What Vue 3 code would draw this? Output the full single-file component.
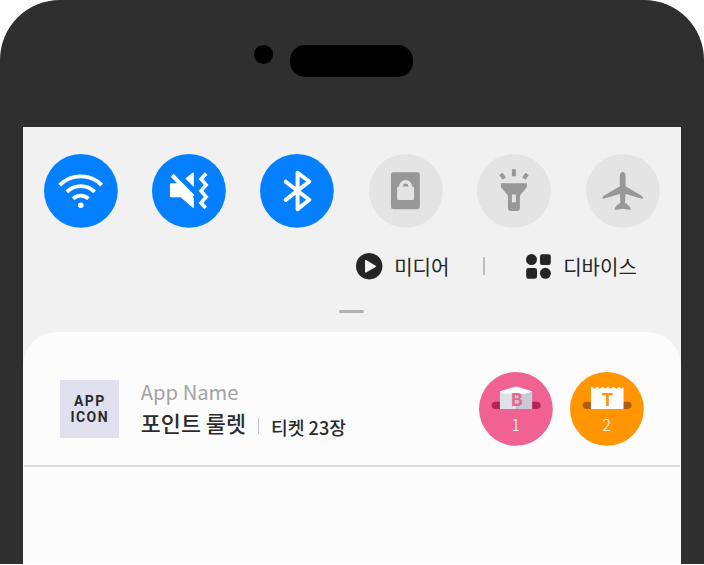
<script setup>
const toggles = [
  { name: 'wifi', on: true },
  { name: 'mute', on: true },
  { name: 'bluetooth', on: true },
  { name: 'lock', on: false },
  { name: 'torch', on: false },
  { name: 'airplane', on: false },
]
</script>

<template>
  <div class="phone">
    <div class="bezel">
      <span class="camera"></span>
      <span class="speaker"></span>
    </div>
    <div class="screen">
      <div class="toggles">
        <svg v-for="t in toggles" :key="t.name" class="toggle" viewBox="0 0 74 74">
          <circle cx="37" cy="37" r="37" :fill="t.on ? '#0480ff' : '#e4e4e4'" />
          <g v-if="t.name === 'wifi'" fill="none" stroke="#fff" stroke-width="3.8">
            <path d="M15.8 31.2A29.6 29.6 0 0 1 57.9 31.2" />
            <path d="M22.9 38A19.8 19.8 0 0 1 50.8 38" />
            <path d="M29.1 44.9A11 11 0 0 1 44.6 44.9" />
            <circle cx="36.9" cy="51.4" r="2.8" fill="#fff" stroke="none" />
          </g>
          <g v-else-if="t.name === 'mute'" fill="#fff">
            <path d="M18.7 29.4H27L42 43.8V53.8H41L28.7 43.4H18.7L18 42.7V30.1Z" />
            <path d="M20.2 21.3L41 42.6" stroke="#fff" stroke-width="4" />
            <path d="M33.5 24.6L40.6 18.7H42V33.2Z" />
            <path d="M54.3 19.5L49.2 25L54.3 31L49.2 37L54.3 43L49.2 49L53.8 54.2" fill="none" stroke="#fff" stroke-width="3.6" />
          </g>
          <path v-else-if="t.name === 'bluetooth'" d="M25.8 27.8L49.4 45.9L37.7 55.4V18.9L49.4 27.6L25.8 46" fill="none" stroke="#fff" stroke-width="4" stroke-linecap="round" stroke-linejoin="round" />
          <g v-else-if="t.name === 'lock'">
            <rect x="22" y="18.4" width="29" height="37" rx="2.4" fill="#989898" />
            <rect x="28.2" y="32.6" width="17" height="13.6" rx="1.6" fill="#e4e4e4" />
            <path d="M32.2 33.5V32.4a4.5 4.5 0 0 1 9 0V33.5" fill="none" stroke="#e4e4e4" stroke-width="3.6" />
          </g>
          <g v-else-if="t.name === 'torch'" fill="#989898">
            <path fill-rule="evenodd" d="M24 29.3H50V33.4L43 41.7V54.2Q43 57.2 40 57.2H34Q31 57.2 31 54.2V41.7L24 33.4ZM35 40.6V48.3H39V40.6Z" />
            <rect x="35" y="15.2" width="4" height="7.2" />
            <path d="M24 19.9L27.2 24.7M50.2 19.9L47 24.7" stroke="#989898" stroke-width="4" />
          </g>
          <path v-else d="M36.8 17.7C38.6 17.7 39.7 20.2 39.7 23V32.3L55.4 41.6C56.7 42.4 57 43.2 57 45L39.7 40.2L39 48.6L43.2 52.2Q44.9 53.6 44.7 56.2L36.8 54.8L28.8 56.2Q28.6 53.6 30.4 52.2L34.5 48.6L33.9 40.2L16.6 45C16.6 43.2 16.9 42.4 18.2 41.6L33.9 32.3V23C33.9 20.2 35 17.7 36.8 17.7Z" fill="#989898" />
        </svg>
      </div>

      <div class="shortcuts">
        <svg class="play" viewBox="0 0 26 26">
          <circle cx="13" cy="13" r="13" fill="#252525" />
          <path d="M9.6 7.6V18.6L19 13.1Z" fill="#f1f1f1" stroke="#f1f1f1" stroke-width="1.4" stroke-linejoin="round" />
        </svg>
        <span class="label media">미디어</span>
        <span class="bar"></span>
        <svg class="grid" viewBox="0 0 25 25" fill="#252525">
          <circle cx="5.5" cy="5.6" r="5.5" />
          <rect x="14" y="0.2" width="10.8" height="10.8" rx="2.2" />
          <rect x="0.2" y="14" width="10.8" height="10.8" rx="2.2" />
          <circle cx="19.4" cy="19.3" r="5.5" />
        </svg>
        <span class="label">디바이스</span>
      </div>
      <div class="handle"></div>

      <div class="sheet">
        <div class="notice">
          <div class="app-icon"><span>APP</span><span>ICON</span></div>
          <div class="info">
            <div class="app-name">App Name</div>
            <div class="line">
              <span class="title">포인트 룰렛</span>
              <span class="sep"></span>
              <span class="count">티켓 23장</span>
            </div>
          </div>
          <svg class="badge pink" viewBox="0 0 74 74">
            <circle cx="37" cy="37" r="37" fill="#f06292" />
            <rect x="12.7" y="29.8" width="49" height="7.2" rx="3.6" fill="#b92257" />
            <path d="M21 19L37.3 20V37H21Z" fill="#dfe3e9" />
            <path d="M37.3 20L53.3 19V37H37.3Z" fill="#c5ccd4" />
            <path d="M21 19.3L35 15Q37.2 14.3 39.4 15L53.3 19.3L47 21.8H27.3Z" fill="#fff" />
            <text class="letter" x="38" y="34" text-anchor="middle" fill="#f06292">B</text>
            <text class="num" x="36.8" y="59.2" text-anchor="middle">1</text>
          </svg>
          <svg class="badge" viewBox="0 0 74 74">
            <circle cx="37" cy="37" r="37" fill="#ff9500" />
            <rect x="12.7" y="29.8" width="49" height="7.2" rx="3.6" fill="#b15c0b" />
            <path d="M21 37V14.8L22.5 15L24.5 17L26.5 15H28L30 17L32 15H33.5L35.5 17L37.5 15H39L41 17L43 15H44.5L46.5 17L48.5 15H50L51.8 17L53.7 14.8V37Z" fill="#fff" />
            <text class="letter" x="37.6" y="34" text-anchor="middle" fill="#ff9500">T</text>
            <text class="num" x="36.8" y="59.2" text-anchor="middle">2</text>
          </svg>
        </div>
      </div>
    </div>
  </div>
</template>

<style>
body {
  background: #fff;
  overflow: hidden;
}
</style>

<style scoped>
.phone {
  box-sizing: border-box;
  width: 704px;
  height: 564px;
  padding: 0 23px;
  background: #2f2f2f;
  border-radius: 60px 60px 0 0;
  overflow: hidden;
  font-family: "Noto Sans CJK KR", "Noto Sans", sans-serif;
}
.bezel {
  box-sizing: border-box;
  height: 127px;
  padding: 45px 0 0 231px;
  display: flex;
  align-items: flex-start;
  gap: 17.8px;
}
.camera {
  width: 18.5px;
  height: 18.5px;
  border-radius: 50%;
  background: #000;
}
.speaker {
  width: 123px;
  height: 32px;
  border-radius: 15px;
  background: #000;
}
.screen {
  display: flex;
  flex-direction: column;
  height: 437px;
  background: #f1f1f1;
}
.toggles {
  display: flex;
  justify-content: space-between;
  padding: 26.7px 21.6px 0 20.7px;
}
.toggle,
.badge {
  display: block;
  flex: none;
  width: 73.8px;
  height: 73.8px;
  overflow: visible;
}
.shortcuts {
  display: flex;
  align-items: center;
  height: 28px;
  margin-top: 25px;
  padding-left: 333.3px;
}
.play {
  width: 26.4px;
  height: 26.4px;
  overflow: visible;
}
.label {
  width: 75px;
  margin-left: 12px;
  padding-top: 2px;
  font-size: 20px;
  line-height: 28px;
  color: #252525;
  white-space: nowrap;
}
.label.media {
  width: 55px;
  margin-left: 11.5px;
}
.bar {
  width: 2px;
  height: 18px;
  margin: 0 41px 0 34px;
  background: #bdbdbd;
}
.grid {
  width: 25px;
  height: 25px;
  overflow: visible;
}
.handle {
  width: 25px;
  height: 3px;
  margin: 29.5px 0 0 316.3px;
  border-radius: 1.5px;
  background: #b0b0b0;
}
.sheet {
  flex: 1;
  margin-top: 19px;
  border-radius: 34px 34px 0 0;
  background: #fcfcfc;
}
.notice {
  box-sizing: border-box;
  display: flex;
  align-items: flex-start;
  height: 135px;
  margin: 0 1px;
  padding: 40px 36px 0 36.3px;
  border-bottom: 2px solid #dcdcdc;
}
.app-icon {
  box-sizing: border-box;
  width: 58.5px;
  height: 58px;
  margin-top: 8px;
  padding-top: 13px;
  background: #e1e0ef;
  display: flex;
  flex-direction: column;
  align-items: center;
  font-family: Roboto, sans-serif;
  font-weight: 700;
  font-size: 14px;
  line-height: 16px;
  letter-spacing: 1.4px;
  color: #2b2b2b;
}
.app-icon span {
  margin-right: -0.4px;
}
.info {
  flex: 1;
  margin: 5px 0 0 22px;
}
.app-name {
  font-size: 20.2px;
  line-height: 30px;
  font-weight: 400;
  color: #a3a3a3;
}
.line {
  display: flex;
  align-items: center;
  height: 32px;
  color: #2b2b2b;
  white-space: nowrap;
}
.title {
  font-size: 21.8px;
  font-weight: 500;
  line-height: 32px;
}
.sep {
  width: 1px;
  height: 16px;
  margin: 6px 12px 0 12px;
  background: #c4c4c4;
}
.count {
  margin-top: 8px;
  font-size: 18.2px;
  font-weight: 500;
  line-height: 28px;
}
.pink {
  margin-right: 17.4px;
}
.letter {
  font-family: Inter, sans-serif;
  font-weight: 700;
  font-size: 18px;
}
.num {
  font-family: "Noto Sans CJK KR", sans-serif;
  font-weight: 300;
  font-size: 16px;
  fill: #fff;
}
</style>
